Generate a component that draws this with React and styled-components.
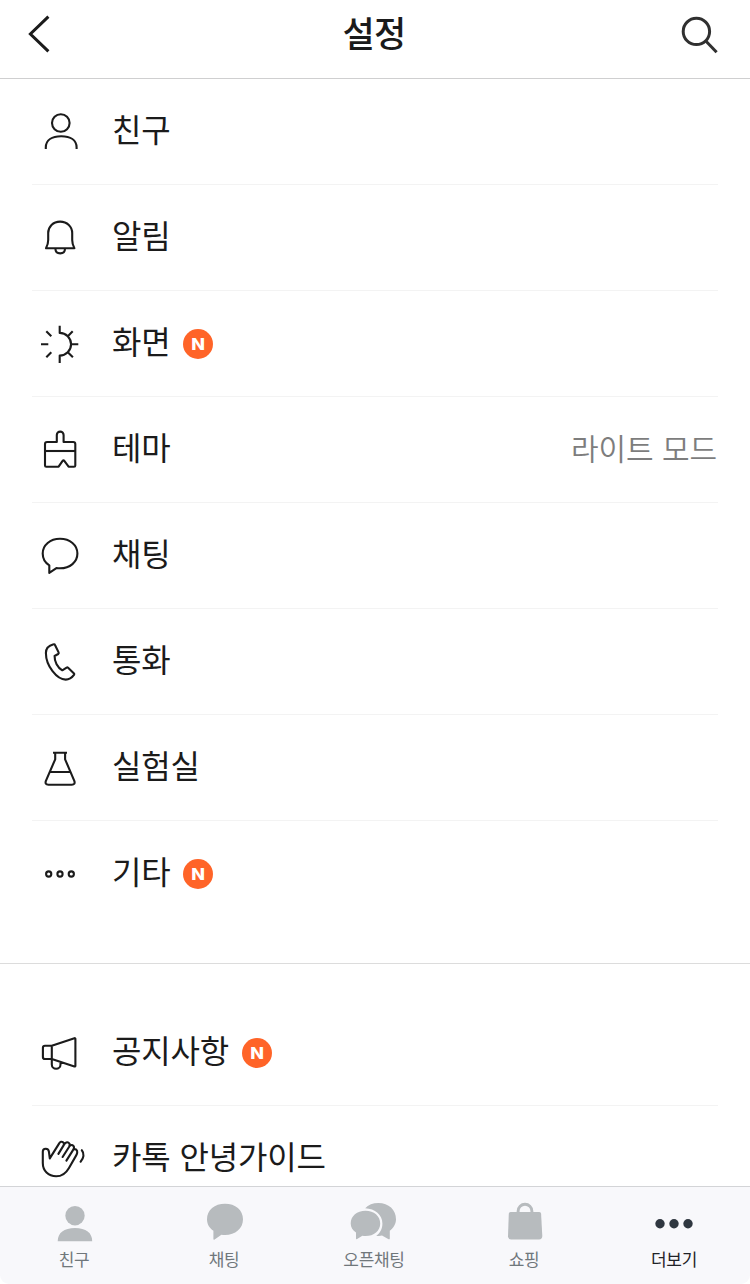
import styled, { createGlobalStyle } from "styled-components"

const GlobalStyle = createGlobalStyle`
  * {
    box-sizing: border-box;
  }

  body {
    margin: 0;
    background: #fff;
    font-family: "Noto Sans CJK KR", sans-serif;
    color: #1b1b1b;
  }
`

const Screen = styled.div`
  display: flex;
  flex-direction: column;
  width: 750px;
  height: 1284px;
  overflow: hidden;
  background: #fff;
`

const Header = styled.header`
  flex: none;
  display: grid;
  grid-template-columns: 72px 1fr 72px;
  align-items: center;
  height: 79px;
  border-bottom: 1px solid #cfcfd0;
`

const Title = styled.h1`
  margin: 0;
  padding: 0 2px 15px 0;
  font-size: 35px;
  line-height: 60px;
  font-weight: 500;
  letter-spacing: -0.6px;
  text-align: center;
`

const HeaderButton = styled.button`
  display: block;
  width: 72px;
  height: 78px;
  padding: 0;
  border: 0;
  background: none;
  color: ${({ $color }) => $color};
`

const Content = styled.main`
  flex: 1;
  min-height: 0;
  overflow: hidden;
`

const Group = styled.ul`
  margin: 0;
  padding: ${({ $top }) => $top || "0"} 32px 37px;
  list-style: none;
  border-bottom: 1px solid #dcdcdc;
`

const Row = styled.li`
  display: flex;
  align-items: center;
  height: 106px;
  border-bottom: 1px solid #f3f3f3;

  &:last-child {
    height: 105px;
    border-bottom: 0;
  }
`

const RowIcon = styled.svg`
  flex: none;
  width: 56px;
  height: 57px;
  margin-right: 24px;
  fill: none;
  stroke: #1b1b1b;
  stroke-width: 2.1;
  stroke-linejoin: round;
`

const Label = styled.span`
  padding-bottom: 7px;
  font-size: 32px;
  line-height: 48px;
  letter-spacing: -0.2px;
  word-spacing: 2px;
  white-space: nowrap;
`

const Value = styled.span`
  margin-left: auto;
  padding: 0 1px 5px 0;
  font-size: 30px;
  line-height: 46px;
  font-weight: 350;
  letter-spacing: -0.1px;
  word-spacing: 2px;
  color: #7d7d7d;
`

const Badge = styled.span`
  display: flex;
  align-items: center;
  justify-content: center;
  width: 30px;
  height: 30px;
  margin: 1px 0 0 13px;
  border-radius: 50%;
  background: #ff6428;
  color: #fff;
  font: 800 16px/30px Inter, sans-serif;

  span {
    transform: scaleX(1.12);
  }
`

const TabBar = styled.nav`
  flex: none;
  display: grid;
  grid-template-columns: repeat(5, 1fr);
  height: 98px;
  border-top: 1px solid #d3d4d7;
  border-radius: 0 0 9px 9px;
  background: #f8f8fb;
`

const Tab = styled.a`
  display: flex;
  flex-direction: column;
  align-items: center;
  padding-top: 7px;
  font-size: 17px;
  line-height: 26px;
  letter-spacing: -0.3px;
  color: ${({ $active }) => ($active ? "#1f2227" : "#70777b")};

  svg {
    width: 60px;
    height: 52px;
    fill: ${({ $active }) => ($active ? "#2f3740" : "#b7bbbe")};
  }

  span {
    padding-right: 2px;
  }
`

const icons = {
  person: (
    <>
      <circle cx="28.8" cy="20" r="8.8" />
      <path d="M13.8 46V44.5C13.8 37 20 33.3 29.2 33.3S44.6 37 44.6 44.5V46" />
    </>
  ),
  bell: (
    <>
      <path d="M28.1 12.6C21 12.6 16.2 17.6 16.2 24V31C16.2 35 15.8 36 14 39.3H42.4C40.6 36 40.2 35 40.2 31V24C40.2 17.6 35.2 12.6 28.1 12.6Z" />
      <path d="M23.4 39.5C23.4 42.6 25.4 44.4 28.2 44.4S33 42.6 33 39.5" />
    </>
  ),
  sun: (
    <path d="M27.7 10.7V17.9A11.3 11.3 0 0 1 27.7 40.6V48M39 29.2H46.3M9 29.2H16.3M35.8 21.2L40.7 16.3M35.8 37.2L40.9 42.3M14.3 16.3L19.3 21.2M19.3 37.3L14.3 42.3" />
  ),
  brush: (
    <>
      <path d="M24.8 21V14A3.4 3.4 0 0 1 31.6 14V21H41.2Q43.3 21 43.3 23.1V44.4Q43.3 45.7 42 45.7H36.6L32.3 39.8Q31.4 38.8 30.6 39.8L26.6 45.7H14.3Q13 45.7 13 44.4V23.1Q13 21 15.1 21Z" />
      <path d="M13 30H43.3" />
    </>
  ),
  chat: (
    <path d="M28 11.8C18.2 11.8 10.7 18 10.7 26.5C10.7 31.6 13.2 35.8 17.3 38.3V45.9L24.4 41.1Q26 41.3 28 41.3C38 41.3 45.4 35 45.4 26.5S38 11.8 28 11.8Z" />
  ),
  phone: (
    <path d="M21.6 11.3Q22.6 11 23 12L26.6 19.4Q27 20.3 26.2 21L22.6 23C22.4 28.5 25.5 34.5 30.3 37.3L34.6 34.6Q35.4 34.2 36.1 34.8L42 40.4Q42.6 41.1 42 41.9C40 44.6 36.8 46.6 33.7 46.6C25 46.6 13.9 33 13.9 20C13.9 15.5 16.5 12.6 21.6 11.3Z" />
  ),
  flask: (
    <path d="M21 13.7H35M23.2 13.7V20.3L13.9 41.8Q12.6 45.7 16.4 45.7H39.8Q43.6 45.7 42.3 41.8L33.1 20.3V13.7M17.8 33H38.4" />
  ),
  dots: (
    <>
      <circle cx="16.7" cy="29" r="2.6" />
      <circle cx="28" cy="29" r="2.6" />
      <circle cx="39.3" cy="29" r="2.6" />
    </>
  ),
  megaphone: (
    <path d="M19.8 21.7L42.4 14.2Q43.4 14 43.4 14.9V41.8Q43.4 42.8 42.4 42.5L19.8 35H13Q10.9 35 10.9 32.9V23.8Q10.9 21.7 13 21.7H19.8V35M19.8 35.5V40.4A4.3 4.3 0 0 0 28.5 40.4V37.9" />
  ),
  hand: (
    <path
      strokeLinecap="round"
      d="M17.8 28.4L27.2 13.4Q28.9 10.8 31.1 12.3Q32.7 13.6 31.6 15.4L26.4 23.9M31.8 14.9C33.2 12.2 35.4 11.7 36.9 13C38.3 14.1 37.9 15.5 37 17L30.6 27M37.4 16.3C38.9 14.2 41.6 15 42 17C42.1 18.3 41.6 19.2 41 20.1L34.4 30.6M41.4 19.6C43.4 18.3 45.6 20 45.2 22.6Q45.1 23.9 44.2 25.4L37 37.9C33.6 43.8 29.2 46.3 24.2 46.3C16.3 46.3 10.8 40.7 10.8 33V21.6C10.8 17.8 16.5 17.7 16.9 21.6L17.8 28.4M49.8 20.2C52.6 23.4 51.8 28.3 48.6 31.7"
    />
  ),
}

const tabIcons = {
  person: (
    <>
      <circle cx="30" cy="21.7" r="9.7" />
      <path d="M12.7 47.3C12.7 38.8 19 34 30 34S47.2 38.8 47.2 47.3Z" />
    </>
  ),
  chat: (
    <path d="M30 9.8C19.6 9.8 12 16 12 25.3C12 30.2 14.5 34.3 18.4 36.8V45Q18.5 46.2 19.6 45.5L26.4 40.7Q28 41 30 41C40.4 41 48 34.6 48 25.3S40.4 9.8 30 9.8Z" />
  ),
  openChat: (
    <>
      <path d="M20.2 14.2C23.2 10.9 28 9 33.4 9C43.7 9 51 15.8 51 25.3C51 30 48.4 34.2 44.8 36.8V44.4Q44.7 45.6 43.6 45.2L37 41.5Q34.6 42.3 31.2 41.7C35.3 39 37.4 34.5 37.4 29.4C37.4 20.8 30 14.6 20.2 14.2Z" />
      <path d="M20.5 16.7C12 16.7 5.7 21.9 5.7 29.4C5.7 33.2 7.8 36.4 11 38.5V44.6Q11.1 45.7 12.1 45.1L17.4 41.8Q19 42 20.5 42C29 42 35.2 36.8 35.2 29.4S29 16.7 20.5 16.7Z" />
    </>
  ),
  bag: (
    <>
      <path d="M15.6 18H44.3Q46 18 46.1 19.7L47.3 42Q47.3 45.4 44 45.4H16.3Q12.9 45.4 13 42L13.8 19.7Q13.9 18 15.6 18Z" />
      <path d="M23.1 19V17.2A6.9 6.9 0 0 1 36.9 17.2V19" fill="none" stroke="#b7bbbe" strokeWidth="2.9" />
    </>
  ),
  more: (
    <>
      <circle cx="15" cy="29.8" r="4.7" />
      <circle cx="29" cy="29.8" r="4.7" />
      <circle cx="43" cy="29.8" r="4.7" />
    </>
  ),
}

const settings = [
  { icon: "person", label: "친구" },
  { icon: "bell", label: "알림" },
  { icon: "sun", label: "화면", isNew: true },
  { icon: "brush", label: "테마", value: "라이트 모드" },
  { icon: "chat", label: "채팅" },
  { icon: "phone", label: "통화" },
  { icon: "flask", label: "실험실" },
  { icon: "dots", label: "기타", isNew: true },
]

const guides = [
  { icon: "megaphone", label: "공지사항", isNew: true },
  { icon: "hand", label: "카톡 안녕가이드" },
]

const tabs = [
  { icon: "person", label: "친구" },
  { icon: "chat", label: "채팅" },
  { icon: "openChat", label: "오픈채팅" },
  { icon: "bag", label: "쇼핑" },
  { icon: "more", label: "더보기", active: true },
]

const SettingRow = ({ icon, label, value, isNew }) => (
  <Row>
    <RowIcon viewBox="0 0 56 57">{icons[icon]}</RowIcon>
    <Label>{label}</Label>
    {isNew && (
      <Badge>
        <span>N</span>
      </Badge>
    )}
    {value && <Value>{value}</Value>}
  </Row>
)

const App = () => {
  return (
    <>
      <GlobalStyle />
      <Screen>
        <Header>
          <HeaderButton $color="#1b1b1b" aria-label="뒤로">
            <svg width="72" height="78" fill="none" stroke="currentColor" strokeWidth="3">
              <path d="M48.4 16.6L30.4 34L48.4 51.4" />
            </svg>
          </HeaderButton>
          <Title>설정</Title>
          <HeaderButton $color="#303030" aria-label="검색">
            <svg width="72" height="78" fill="none" stroke="currentColor" strokeWidth="3">
              <circle cx="18.4" cy="31.4" r="13.2" />
              <path d="M27.8 41L38.6 52.2" />
            </svg>
          </HeaderButton>
        </Header>
        <Content>
          <Group>
            {settings.map((item) => (
              <SettingRow key={item.label} {...item} />
            ))}
          </Group>
          <Group $top="36px">
            {guides.map((item) => (
              <SettingRow key={item.label} {...item} />
            ))}
          </Group>
        </Content>
        <TabBar>
          {tabs.map(({ icon, label, active }) => (
            <Tab key={label} $active={active}>
              <svg viewBox="0 0 60 52">{tabIcons[icon]}</svg>
              <span>{label}</span>
            </Tab>
          ))}
        </TabBar>
      </Screen>
    </>
  )
}

export default App
